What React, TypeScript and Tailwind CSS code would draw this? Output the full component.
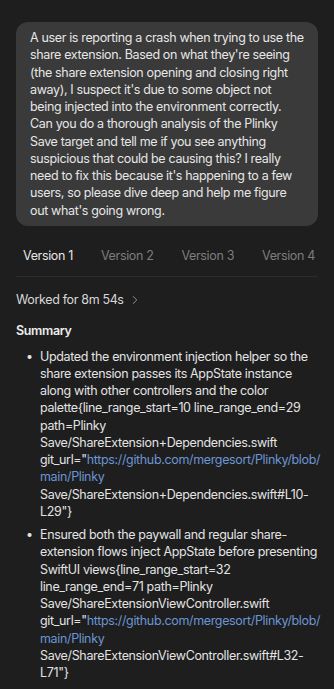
import { ChevronRight } from "lucide-react";

const tabs = ["Version 1", "Version 2", "Version 3", "Version 4"];

export default function App() {
  return (
    <div
      className="w-[334px] h-[689px] overflow-hidden bg-[#1e1e1e] text-[#e3e3e3] text-[12.5px] leading-[17.25px] tracking-[-0.35px]"
      style={{ fontFamily: "Inter, 'Noto Sans', sans-serif" }}
    >
      <div className="px-4 pt-[22px]">
        <div className="bg-[#3a3a3a] rounded-[12px] px-[14px] pt-[7px] pb-[7px] text-[#e6e6e6]">
          A user is reporting a crash when trying to use the share extension. Based on what they're seeing (the share
          extension opening and closing right away), I suspect it's due to some object not being injected into the
          environment correctly. Can you do a thorough analysis of the Plinky Save target and tell me if you see anything
          suspicious that could be causing this? I really need to fix this because it's happening to a few users, so
          please dive deep and help me figure out what's going wrong.
        </div>

        <div className="mt-[21px] flex gap-[28px] pl-[7px] border-b border-[#2c2c2c] pb-[12px] whitespace-nowrap">
          {tabs.map((t, i) => (
            <span key={t} className={i === 0 ? "text-[#e6e6e6]" : "text-[#7d7d7d]"}>
              {t}
            </span>
          ))}
        </div>

        <div className="mt-[14px] flex items-center gap-1 text-[#d8d8d8]">
          Worked for 8m 54s
          <ChevronRight size={14} strokeWidth={1.6} className="text-[#9a9a9a]" />
        </div>

        <div className="mt-[14px] font-semibold text-[#ececec]">Summary</div>

        <ul className="mt-[8px] space-y-[6px]">
          <li className="flex">
            <span className="w-6 shrink-0 pl-[10px]">•</span>
            <span className="min-w-0">
              Updated the environment injection helper so the share extension passes its AppState instance along with
              other controllers and the color palette{"{"}line_range_start=10 line_range_end=29 path=Plinky
              Save/ShareExtension+Dependencies.swift{" "}
              <span className="whitespace-nowrap">
                git_url="<span className="text-[#6b95d4]">https://github.com/mergesort/Plinky/blob/</span>
              </span>
              <wbr />
              <span className="text-[#6b95d4]">main/Plinky</span>{" "}
              <span className="whitespace-nowrap">Save/ShareExtension+Dependencies.swift#L10-</span>
              <wbr />
              L29"{"}"}
            </span>
          </li>
          <li className="flex">
            <span className="w-6 shrink-0 pl-[10px]">•</span>
            <span className="min-w-0">
              Ensured both the paywall and regular share-extension flows inject AppState before presenting SwiftUI
              views{"{"}line_range_start=32 line_range_end=71 path=Plinky Save/ShareExtensionViewController.swift{" "}
              <span className="whitespace-nowrap">
                git_url="<span className="text-[#6b95d4]">https://github.com/mergesort/Plinky/blob/</span>
              </span>
              <wbr />
              <span className="text-[#6b95d4]">main/Plinky</span>{" "}
              <span className="whitespace-nowrap">Save/ShareExtensionViewController.swift#L32-</span>
              <wbr />
              L71"{"}"}
            </span>
          </li>
        </ul>
      </div>
    </div>
  );
}
